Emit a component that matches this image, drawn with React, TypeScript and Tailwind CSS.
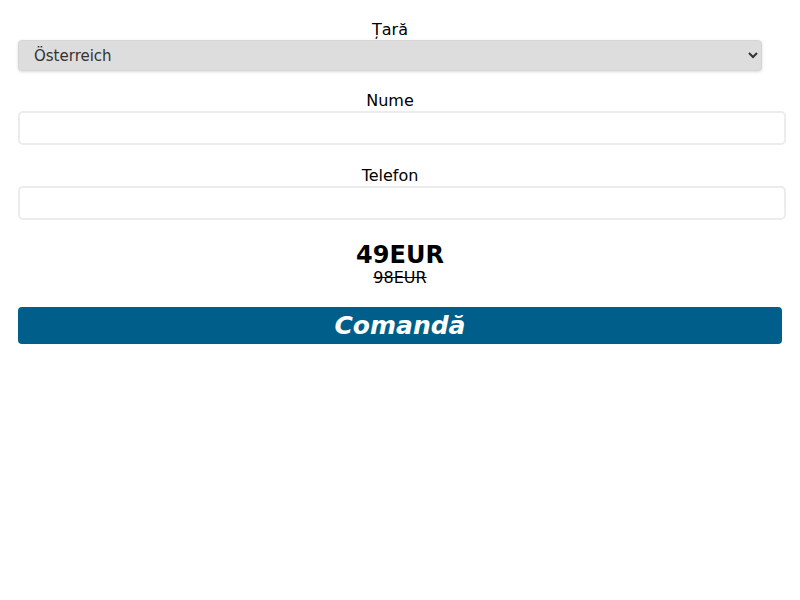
import React from "react";

export default function App() {
  return (
    <div className="w-[800px] bg-white pt-[18px] pl-[18px] text-black" style={{ fontFamily: '"DejaVu Sans", sans-serif' }}>
      <div className="w-[744px] flex flex-col">
        <label className="text-[16px] leading-[20px] pt-[2px] h-[22px] block text-center">Țară</label>
        <select
          className="w-[744px] h-[31px] bg-[#dddddd] rounded-[4px] border border-[#d6d6d6] shadow-[0_1px_3px_rgba(0,0,0,0.15)] pl-[11px] pr-[4px] text-[15px] text-[#333]"
          style={{ fontFamily: '"DejaVu Sans", sans-serif' }}
          defaultValue="AT"
        >
          <option value="AT">Österreich</option>
        </select>
      </div>
      <div className="flex flex-col mt-[18px]">
        <label className="w-[744px] text-[16px] leading-[20px] pt-[2px] h-[22px] block text-center">Nume</label>
        <input className="w-[768px] h-[34px] border-2 border-[#ececec] rounded-[5px] bg-white" />
      </div>
      <div className="flex flex-col mt-[19px]">
        <label className="w-[744px] text-[16px] leading-[20px] pt-[2px] h-[22px] block text-center">Telefon</label>
        <input className="w-[768px] h-[34px] border-2 border-[#ececec] rounded-[5px] bg-white" />
      </div>
      <div className="w-[764px] flex flex-col items-center mt-[21px]">
        <div className="text-[24px] font-bold leading-[28px]">49EUR</div>
        <div className="text-[16px] leading-[18px] line-through">98EUR</div>
      </div>
      <button className="mt-[20px] w-[764px] h-[37px] bg-[#005f8a] rounded-[4px] text-white text-[25px] font-bold italic leading-[37px]" style={{ fontFamily: '"DejaVu Sans", sans-serif' }}>
        Comandă
      </button>
    </div>
  );
}
